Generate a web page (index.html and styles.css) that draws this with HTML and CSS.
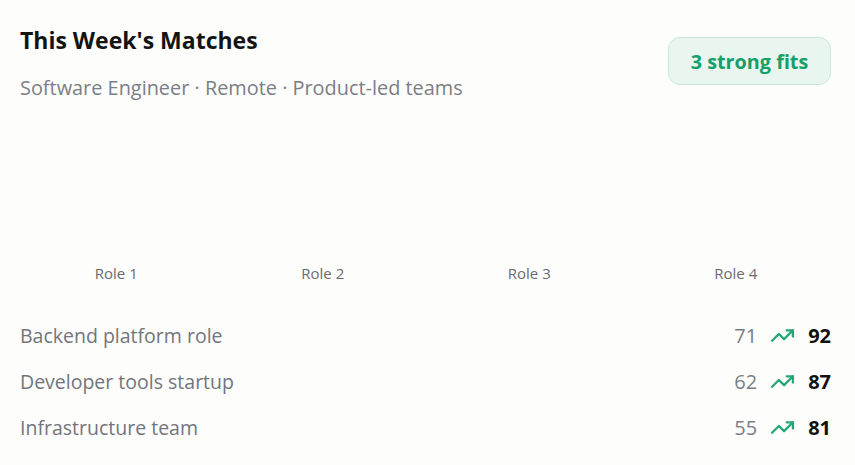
FILE: index.html
```html
<!DOCTYPE html>
<html lang="en">
<head>
<meta charset="utf-8">
<title>This Week's Matches</title>
<link rel="stylesheet" href="styles.css">
</head>
<body>
<div class="card">
  <header class="head">
    <div class="titles">
      <h1 class="title">This Week's Matches</h1>
      <p class="subtitle">Software Engineer · Remote · Product-led teams</p>
    </div>
    <span class="badge">3 strong fits</span>
  </header>
  <div class="chart">
    <div class="plot"></div>
    <div class="axis">
      <span class="tick">Role 1</span>
      <span class="tick">Role 2</span>
      <span class="tick">Role 3</span>
      <span class="tick">Role 4</span>
    </div>
  </div>
  <ul class="rows">
    <li class="row">
      <span class="name">Backend platform role</span>
      <span class="scores"><span class="old">71</span><svg class="trend" viewBox="0 0 24 24"><polyline points="2 17 8.5 10.5 13.5 15.5 22 7"/><polyline points="16 7 22 7 22 13"/></svg><span class="new">92</span></span>
    </li>
    <li class="row">
      <span class="name">Developer tools startup</span>
      <span class="scores"><span class="old">62</span><svg class="trend" viewBox="0 0 24 24"><polyline points="2 17 8.5 10.5 13.5 15.5 22 7"/><polyline points="16 7 22 7 22 13"/></svg><span class="new">87</span></span>
    </li>
    <li class="row">
      <span class="name">Infrastructure team</span>
      <span class="scores"><span class="old">55</span><svg class="trend" viewBox="0 0 24 24"><polyline points="2 17 8.5 10.5 13.5 15.5 22 7"/><polyline points="16 7 22 7 22 13"/></svg><span class="new">81</span></span>
    </li>
  </ul>
</div>
</body>
</html>
```
FILE: styles.css
```css
html, body {
  margin: 0;
  padding: 0;
  background: #fdfdfb;
}
body {
  font-family: "Open Sans", "Noto Sans", sans-serif;
  color: #111;
}
.card {
  padding: 24px 24px 0 20px;
  width: 855px;
  box-sizing: border-box;
}
.head {
  display: flex;
  justify-content: space-between;
  align-items: flex-start;
}
.title {
  margin: 0;
  font-size: 23px;
  font-weight: 700;
  line-height: 32px;
  color: #141414;
}
.subtitle {
  margin: 19px 0 0;
  font-size: 19.9px;
  line-height: 26px;
  color: #7b7e86;
}
.badge {
  margin-top: 13px;
  display: inline-flex;
  align-items: center;
  justify-content: center;
  height: 48px;
  width: 163px;
  box-sizing: border-box;
  border: 1px solid #c8e9d8;
  background: #e9f6ef;
  border-radius: 12px;
  color: #15a06a;
  font-weight: 700;
  font-size: 19.8px;
}
.chart {
  margin-left: -7px;
  width: 826px;
}
.plot {
  height: 145px;
}
.axis {
  display: grid;
  grid-template-columns: repeat(4, 1fr);
  padding-top: 16px;
  height: 22px;
}
.tick {
  text-align: center;
  font-size: 15px;
  color: #686b73;
  line-height: 22px;
}
.rows {
  list-style: none;
  margin: 34px 0 0;
  padding: 0;
  display: flex;
  flex-direction: column;
  gap: 12px;
}
.row {
  display: flex;
  justify-content: space-between;
  align-items: center;
  height: 34px;
}
.name {
  font-size: 19.5px;
  color: #72757d;
}
.scores {
  display: flex;
  align-items: center;
  gap: 13px;
}
.old {
  font-size: 20px;
  color: #7b7e86;
}
.trend {
  width: 25px;
  height: 25px;
  fill: none;
  stroke: #22a774;
  stroke-width: 2.2;
  stroke-linecap: round;
  stroke-linejoin: round;
}
.new {
  font-size: 20px;
  font-weight: 700;
  color: #111;
}
```
